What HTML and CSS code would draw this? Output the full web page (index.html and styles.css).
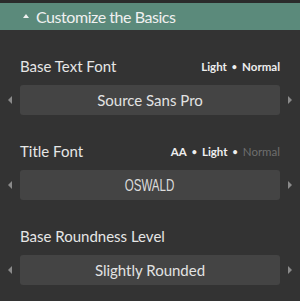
FILE: index.html
```html
<!DOCTYPE html>
<html lang="en">
<head>
    <meta charset="UTF-8">
    <title>Customize the Basics</title>
    <link rel="stylesheet" href="styles.css">
</head>
<body>
    <div class="panel">
        <!-- Header -->
        <div class="panel-head">
            <span class="caret"></span>
            <span class="head-title">Customize the Basics</span>
        </div>

        <div class="option">
            <div class="option-top">
                <span class="option-label">Base Text Font</span>
                <span class="option-weights">
                    <span>Light</span><span class="dot">•</span><span>Normal</span>
                </span>
            </div>
            <div class="picker">
                <span class="arrow arrow-left"></span>
                <div class="picker-box">Source Sans Pro</div>
                <span class="arrow arrow-right"></span>
            </div>
        </div>

        <div class="option">
            <div class="option-top">
                <span class="option-label">Title Font</span>
                <span class="option-weights">
                    <span>AA</span><span class="dot">•</span><span>Light</span><span class="dot">•</span><span class="off">Normal</span>
                </span>
            </div>
            <div class="picker">
                <span class="arrow arrow-left"></span>
                <div class="picker-box"><span class="oswald">OSWALD</span></div>
                <span class="arrow arrow-right"></span>
            </div>
        </div>

        <div class="option">
            <div class="option-top">
                <span class="option-label">Base Roundness Level</span>
            </div>
            <div class="picker">
                <span class="arrow arrow-left"></span>
                <div class="picker-box">Slightly Rounded</div>
                <span class="arrow arrow-right"></span>
            </div>
        </div>
    </div>
</body>
</html>
```

FILE: styles.css
```css
body {
    margin: 0;
    padding: 0;
    background: #333333;
    font-family: Lato, "Open Sans", sans-serif;
    color: #e6e6e6;
}

.panel {
    width: 300px;
    height: 301px;
    border-top: 3px solid #2b2b2b;
    box-sizing: border-box;
}

/* Header */
.panel-head {
    display: flex;
    align-items: center;
    height: 27px;
    background: #5b8a7b;
    padding-left: 23px;
    color: #f0f0f0;
}

.caret {
    width: 0;
    height: 0;
    border-left: 3px solid transparent;
    border-right: 3px solid transparent;
    border-bottom: 4px solid #f0f0f0;
    margin-right: 7px;
    margin-top: -1px;
}

.head-title {
    font-size: 16px;
    letter-spacing: -0.45px;
}

/* Options */
.option {
    margin-top: 26px;
}

.option:first-of-type {
    margin-top: 27px;
}

.option-top {
    display: flex;
    justify-content: space-between;
    align-items: center;
    height: 20px;
    padding: 0 20px;
}

.option-label {
    font-size: 15px;
}

.option-weights {
    display: flex;
    align-items: center;
    gap: 5px;
    font-size: 11.5px;
    font-weight: bold;
    color: #eeeeee;
}

.option-weights .dot {
    font-size: 9px;
}

.option-weights .off {
    color: #6e6e6e;
    font-weight: normal;
}

.picker {
    display: flex;
    align-items: center;
    margin-top: 9px;
}

.picker-box {
    flex: 1;
    height: 30px;
    line-height: 30px;
    background: #444444;
    border-radius: 3px;
    text-align: center;
    font-size: 15px;
    color: #e2e2e2;
}

.oswald {
    display: inline-block;
    font-family: "Liberation Sans", sans-serif;
    font-size: 17px;
    transform: scaleX(0.68);
    color: #dcdcdc;
}

.arrow {
    width: 20px;
    display: flex;
    justify-content: center;
}

.arrow::before {
    content: "";
    width: 0;
    height: 0;
    border-top: 4px solid transparent;
    border-bottom: 4px solid transparent;
}

.arrow-left::before {
    border-right: 4px solid #8a8a8a;
}

.arrow-right::before {
    border-left: 4px solid #8a8a8a;
}
```
